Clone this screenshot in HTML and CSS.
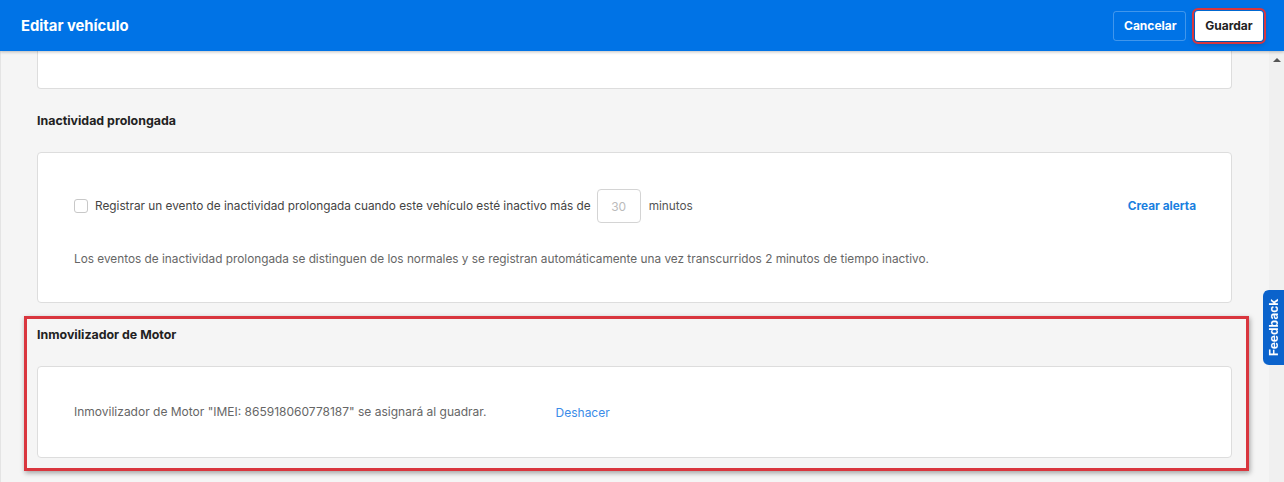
FILE: index.html
```html
<!doctype html>
<html lang="es">
  <head>
    <meta charset="UTF-8" />
    <meta name="viewport" content="width=device-width, initial-scale=1.0" />
    <title>Editar vehículo</title>
    <link rel="stylesheet" href="styles.css">
  </head>
  <body>
    <!-- Cabecera -->
    <div class="header">
      <div class="header-title">Editar vehículo</div>
      <div class="header-actions">
        <button class="btn btn-ghost">Cancelar</button>
        <button class="btn btn-primary highlighted">Guardar</button>
      </div>
    </div>

    <div class="page">
      <div class="main">
        <!-- tarjeta anterior (cortada por el scroll) -->
        <div class="card card-cut"></div>

        <!-- Inactividad prolongada -->
        <div class="section">
          <div class="section-title">Inactividad prolongada</div>
          <div class="card card-idle">
            <div class="idle-row">
              <label class="check-label">
                <span class="checkbox"></span>
                Registrar un evento de inactividad prolongada cuando este vehículo esté inactivo más de
              </label>
              <input class="minutes-input" type="text" placeholder="30">
              <span class="muted-dark">minutos</span>
              <a class="link-bold">Crear alerta</a>
            </div>
            <div class="help-text">
              Los eventos de inactividad prolongada se distinguen de los normales y se registran automáticamente una vez transcurridos 2 minutos de tiempo inactivo.
            </div>
          </div>
        </div>

        <!-- Inmovilizador de Motor -->
        <div class="section highlighted-section">
          <div class="section-title">Inmovilizador de Motor</div>
          <div class="card card-immo">
            <span class="help-text">Inmovilizador de Motor "IMEI: 865918060778187" se asignará al guadrar.</span>
            <a class="link">Deshacer</a>
          </div>
        </div>
      </div>

      <div class="scrollbar">
        <span class="scroll-arrow"></span>
      </div>
    </div>

    <div class="feedback-tab">Feedback</div>
  </body>
</html>
```

FILE: styles.css
```css
* {
  margin: 0;
  padding: 0;
  box-sizing: border-box;
}

body {
  font-family: 'Inter', 'Roboto', sans-serif;
  background: #f5f5f5;
  color: #333;
  height: 482px;
  overflow: hidden;
  display: flex;
  flex-direction: column;
}

/* cabecera */
.header {
  height: 51px;
  background: #0073e6;
  display: flex;
  justify-content: space-between;
  align-items: center;
  padding: 0 21px 0 21px;
  box-shadow: 0 1px 3px rgba(0, 0, 0, 0.25);
  position: relative;
  z-index: 2;
}

.header-title {
  color: white;
  font-size: 14.8px;
  font-weight: 700;
}

.header-actions {
  display: flex;
  align-items: center;
  gap: 9px;
}

.btn {
  height: 30px;
  padding: 0 10px;
  font-family: inherit;
  font-size: 12px;
  font-weight: 700;
  border-radius: 3px;
  cursor: pointer;
}

.btn-ghost {
  background: transparent;
  color: white;
  border: 1px solid rgba(255, 255, 255, 0.25);
  width: 73px;
}

.btn-primary {
  background: white;
  color: #222;
  border: none;
  width: 68px;
}

.highlighted {
  outline: 2px solid #d9363e;
  outline-offset: 1px;
  box-shadow: 0 2px 6px rgba(0, 0, 0, 0.4);
}

/* contenido */
.page {
  flex: 1;
  display: flex;
  min-height: 0;
}

.main {
  flex: 1;
  padding: 0 37px 0 36px;
  border-left: 1px solid #e4e4e4;
}

.card {
  background: white;
  border: 1px solid #ddd;
  border-radius: 4px;
}

.card-cut {
  height: 38px;
  border-top: none;
  border-radius: 0 0 4px 4px;
}

.section-title {
  font-size: 12.4px;
  font-weight: 700;
  line-height: 20px;
  color: #222;
  margin: 22px 0 21px;
}

.card-idle {
  padding: 36px 35px 34px 36px;
}

.idle-row {
  display: flex;
  align-items: center;
  height: 34px;
  font-size: 11.8px;
  color: #444;
}

.check-label {
  display: flex;
  align-items: center;
  gap: 7px;
}

.checkbox {
  width: 14px;
  height: 14px;
  border: 1px solid #c8c8c8;
  border-radius: 3px;
  background: white;
}

.minutes-input {
  width: 44px;
  height: 34px;
  margin: 0 8px 0 6px;
  border: 1px solid #d4d4d4;
  border-radius: 4px;
  font-family: inherit;
  font-size: 12px;
  text-align: center;
  color: #333;
}

.minutes-input::placeholder {
  color: #bbb;
}

.muted-dark {
  color: #555;
}

.link-bold {
  margin-left: auto;
  color: #1a7fe0;
  font-weight: 700;
  cursor: pointer;
}

.help-text {
  font-size: 11.8px;
  line-height: 18px;
  color: #666;
}

.idle-row + .help-text {
  margin-top: 27px;
}

.card-immo {
  padding: 36px;
  height: 92px;
  display: flex;
  align-items: center;
}

.card-immo .help-text {
  font-size: 12px;
}

.link {
  margin-left: 69px;
  font-size: 12px;
  color: #3b8ce8;
  cursor: pointer;
}

/* recuadro de resaltado */
.highlighted-section {
  position: relative;
}

.highlighted-section::after {
  content: '';
  position: absolute;
  top: -9px;
  left: -13px;
  right: -17px;
  bottom: -13px;
  border: 3px solid #d9363e;
  box-shadow: 1px 2px 5px rgba(0, 0, 0, 0.35);
  pointer-events: none;
}

/* barra de scroll */
.scrollbar {
  width: 15px;
  background: #f0f0f0;
  display: flex;
  justify-content: center;
  padding-top: 7px;
}

.scroll-arrow {
  width: 0;
  height: 0;
  border-left: 4px solid transparent;
  border-right: 4px solid transparent;
  border-bottom: 4px solid #555;
}

/* pestaña feedback */
.feedback-tab {
  position: fixed;
  right: 0;
  top: 290px;
  width: 21px;
  height: 75px;
  background: #0b63cc;
  color: white;
  font-size: 12px;
  font-weight: 700;
  writing-mode: vertical-rl;
  transform: rotate(180deg);
  border-radius: 0 6px 6px 0;
  display: flex;
  align-items: center;
  justify-content: center;
  z-index: 3;
}
```
